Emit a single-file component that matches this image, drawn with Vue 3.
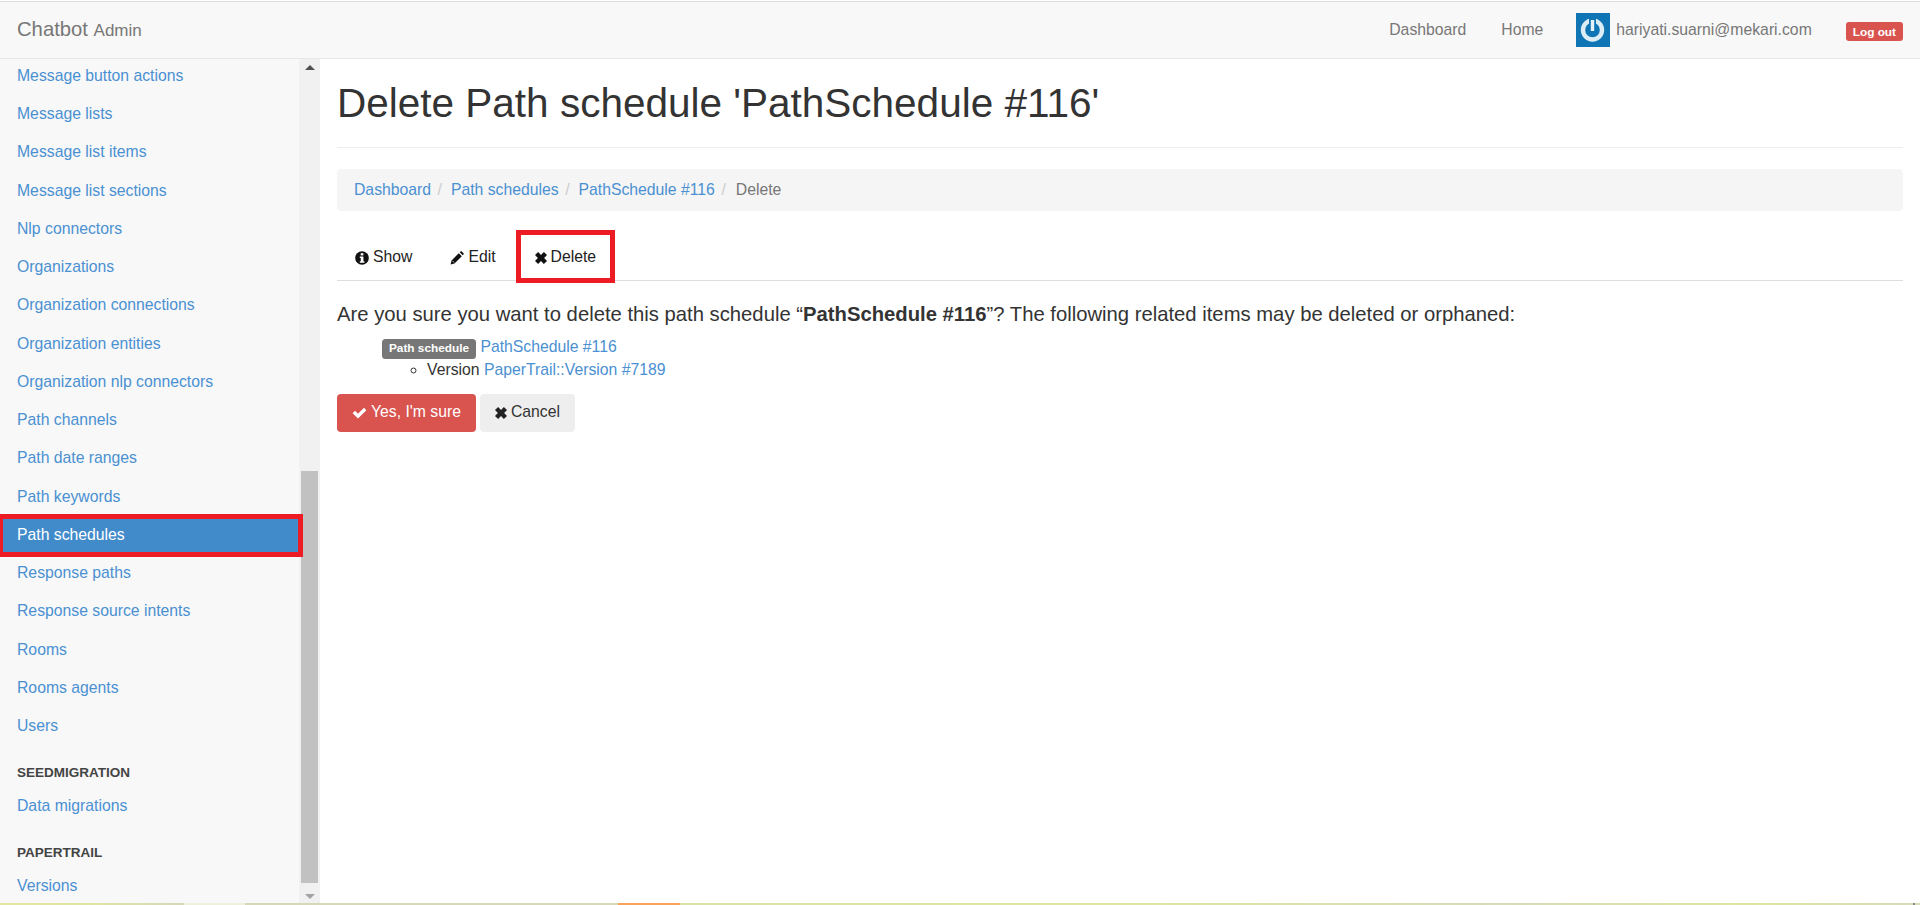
<template>
  <div class="page">
    <nav class="topbar">
      <a class="brand">Chatbot <small>Admin</small></a>
      <ul class="topnav">
        <li><a>Dashboard</a></li>
        <li class="home"><a>Home</a></li>
        <li class="user">
          <svg class="avatar" viewBox="0 0 34 34" width="34" height="34">
            <rect width="34" height="34" fill="#0f75b5" />
            <circle cx="16.5" cy="17" r="9.5" fill="none" stroke="#dcedf6" stroke-width="4.4" />
            <rect x="13" y="5" width="7" height="10" fill="#0f75b5" />
            <rect x="14.8" y="7" width="3.4" height="11" fill="#e6f2f8" />
          </svg>
          <a>hariyati.suarni@mekari.com</a>
        </li>
        <li class="logout"><span>Log out</span></li>
      </ul>
    </nav>

    <div class="body">
      <aside class="side">
        <div class="side-list">
          <ul>
            <li v-for="item in menuTop" :key="item" :class="{ active: item === 'Path schedules' }">
              <a>{{ item }}</a>
            </li>
          </ul>
          <h5 class="group">SEEDMIGRATION</h5>
          <ul><li><a>Data migrations</a></li></ul>
          <h5 class="group last">PAPERTRAIL</h5>
          <ul><li><a>Versions</a></li></ul>
        </div>
        <div class="scrollbar">
          <i class="arrow up"></i>
          <div class="track"><div class="thumb"></div></div>
          <i class="arrow down"></i>
        </div>
      </aside>

      <main class="content">
        <h1>Delete Path schedule 'PathSchedule #116'</h1>
        <ol class="crumbs">
          <li><a>Dashboard</a></li>
          <li><a>Path schedules</a></li>
          <li><a>PathSchedule #116</a></li>
          <li class="here">Delete</li>
        </ol>
        <ul class="tabs">
          <li>
            <svg viewBox="0 0 14 14" width="14" height="14"><circle cx="7" cy="7" r="6.8" fill="#111" /><rect x="5.7" y="2.2" width="2.7" height="2.2" fill="#fff" /><path d="M4.8 5.6h3.6v4.6h1v1.5H4.8v-1.5h1V7.1h-1z" fill="#fff" /></svg>
            Show
          </li>
          <li>
            <svg viewBox="0 0 14 14" width="14" height="14"><path d="M.6 13.4l.9-3.9 7.3-7.3 3 3-7.3 7.3z M9.7 1.3l.8-.8c.4-.4.9-.4 1.3 0l1.7 1.7c.4.4.4.9 0 1.3l-.8.8z" fill="#111" /><path d="M2.4 9.8l1.8 1.8" stroke="#fff" stroke-width=".7" /></svg>
            Edit
          </li>
          <li class="current">
            <svg viewBox="0.6 0.6 10.8 10.8" width="12" height="12"><path d="M.6 3.4 3.4.6 6 3.2 8.6.6l2.8 2.8L8.8 6l2.6 2.6-2.8 2.8L6 8.8l-2.6 2.6L.6 8.6 3.2 6z" fill="#111" /></svg>
            Delete
          </li>
        </ul>
        <p class="question">
          Are you sure you want to delete this path schedule “<b>PathSchedule #116</b>”? The following related items may be deleted or orphaned:
        </p>
        <ul class="related">
          <li>
            <span class="label">Path schedule</span> <a>PathSchedule #116</a>
            <ul><li>Version <a>PaperTrail::Version #7189</a></li></ul>
          </li>
        </ul>
        <div class="actions">
          <button class="btn danger">
            <svg viewBox="0 0 14 14" width="15" height="15"><path d="M.6 7.6 2.8 5.4l2.8 2.8 5.6-5.6 2.2 2.2-7.8 7.8z" fill="#fff" /></svg>
            Yes, I'm sure
          </button>
          <button class="btn plain">
            <svg viewBox="0.6 0.6 10.8 10.8" width="12" height="12"><path d="M.6 3.4 3.4.6 6 3.2 8.6.6l2.8 2.8L8.8 6l2.6 2.6-2.8 2.8L6 8.8l-2.6 2.6L.6 8.6 3.2 6z" fill="#222" /></svg>
            Cancel
          </button>
        </div>
      </main>
    </div>
    <div class="strip"></div>
  </div>
</template>

<script setup>
const menuTop = [
  'Message button actions',
  'Message lists',
  'Message list items',
  'Message list sections',
  'Nlp connectors',
  'Organizations',
  'Organization connections',
  'Organization entities',
  'Organization nlp connectors',
  'Path channels',
  'Path date ranges',
  'Path keywords',
  'Path schedules',
  'Response paths',
  'Response source intents',
  'Rooms',
  'Rooms agents',
  'Users',
]
</script>

<style>
html, body { margin: 0; background: #fff; overflow: hidden; }
</style>

<style scoped>
* { box-sizing: border-box; }
.page {
  height: 905px;
  display: flex;
  flex-direction: column;
  font-family: "Liberation Sans", Arial, sans-serif;
  font-size: 15.75px;
  line-height: 22.5px;
  color: #333;
  overflow: hidden;
  padding-top: 1px;
}
a { color: #4a90d2; text-decoration: none; }
ul, ol { list-style: none; margin: 0; padding: 0; }

.topbar {
  height: 58px;
  flex: none;
  background: #f8f8f8;
  border-top: 1px solid #ddd;
  border-bottom: 1px solid #e7e7e7;
  display: flex;
  align-items: center;
  justify-content: space-between;
}
.brand { font-size: 20.25px; color: #777; margin-left: 17px; }
.brand small { font-size: 17px; }
.topnav { display: flex; align-items: center; }
.topnav a { color: #777; }
.topnav li { margin-right: 35px; }
.topnav .home { margin-right: 33px; }
.topnav .user { display: flex; align-items: center; gap: 6px; margin-right: 34px; }
.topnav .logout { margin-right: 17px; }
.avatar { display: block; }
.logout span {
  display: block;
  background: #d9534f;
  color: #fff;
  font-size: 11.8px;
  font-weight: 700;
  line-height: 14px;
  padding: 2.5px 7px;
  border-radius: 3px;
  margin-top: 3px;
}

.body { flex: 1; display: flex; min-height: 0; }
.side { width: 320px; flex: none; display: flex; background: #f8f8f8; overflow: hidden; }
.side-list { width: 299px; flex: none; margin-top: -2px; position: relative; z-index: 1; }
.side-list li { height: 38.25px; display: flex; align-items: center; padding-left: 17px; }
.side-list li.active {
  background: #428bca;
  border-style: solid;
  border-color: #ed1c24;
  border-width: 5px 5px 5px 3px;
  padding-left: 14px;
  width: 303px;
  height: 43px;
  margin: -2.4px 0;
}
.side-list li.active a { color: #fff; }
.group {
  margin: 0;
  height: 42px;
  padding: 19px 0 0 17px;
  font-size: 13.5px;
  line-height: 18px;
  font-weight: 700;
  color: #444;
}
.group.last { height: 41px; padding-top: 18px; }
.scrollbar { width: 21px; background: #f1f1f1; display: flex; flex-direction: column; }
.track { flex: 1; padding: 0 2px; }
.thumb { height: 412px; margin-top: 395px; background: #c1c1c1; }
.arrow { height: 17px; flex: none; display: flex; align-items: center; justify-content: center; }
.arrow.up::before { content: ""; border: 5px solid transparent; border-top: 0; border-bottom: 5px solid #505050; }
.arrow.down::before { content: ""; border: 5px solid transparent; border-bottom: 0; border-top: 5px solid #a3a3a3; }

.content { flex: 1; padding: 0 17px; min-width: 0; }
h1 {
  margin: 0;
  padding: 22px 0 0;
  height: 89px;
  font-size: 40.5px;
  line-height: 44.5px;
  font-weight: 500;
  color: #333;
  border-bottom: 1px solid #eee;
}
.crumbs {
  display: flex;
  margin-top: 21px;
  height: 42px;
  align-items: center;
  background: #f5f5f5;
  border-radius: 4.5px;
  padding: 0 17px;
}
.crumbs li + li::before { content: "/"; color: #ccc; padding: 0 9px 0 6.5px; }
.crumbs .here::before { padding: 0 10px 0 6.5px; }
.crumbs .here { color: #777; }
.tabs {
  display: flex;
  margin-top: 19px;
  height: 51px;
  border-bottom: 1px solid #ddd;
  color: #222;
}
.tabs li { display: flex; align-items: center; gap: 4px; padding: 2px 18px 0; height: 53px; margin-right: 2px; flex: none; }
.tabs .current { outline: 5px solid #ed1c24; outline-offset: -5px; padding: 2px 19px 0 19px; }
.question { margin: 19px 0 0; font-size: 20.25px; line-height: 28px; color: #333; }
.related { margin-top: 8px; padding-left: 45px; }
.related ul { list-style: circle; padding-left: 45px; }
.related ul li { display: list-item; }
.label {
  background: #777;
  color: #fff;
  font-size: 11.8px;
  font-weight: 700;
  line-height: 14px;
  padding: 2px 7px 4px;
  border-radius: 3.5px;
  display: inline-block;
  vertical-align: baseline;
}
.actions { display: flex; gap: 4px; margin-top: 12px; }
.btn {
  height: 38px;
  border: 0;
  border-radius: 4px;
  font: inherit;
  display: flex;
  align-items: center;
  gap: 4px;
  padding: 0 15px;
}
.btn.danger { background: #d9534f; color: #fff; }
.btn.plain { background: #eee; color: #333; }
.strip {
  height: 2px;
  flex: none;
  margin-top: -2px;
  position: relative;
  z-index: 2;
  background: linear-gradient(90deg,
    #e2e6a0 0, #e0e4a2 90px, #d6d8b8 184px,
    #eef0dc 184px, #eef0dc 245px,
    #d6d8b8 245px, #d6d8b8 618px,
    #f9a25a 618px, #f9a25a 680px,
    #dbe2a8 680px, #e0e6a0 1100px, #d8dcb8 1500px, #dfe5a0 1750px, #d8dcb8 1913px,
    #888 1913px, #888 1915px, #d8dcb8 1915px);
}
</style>
